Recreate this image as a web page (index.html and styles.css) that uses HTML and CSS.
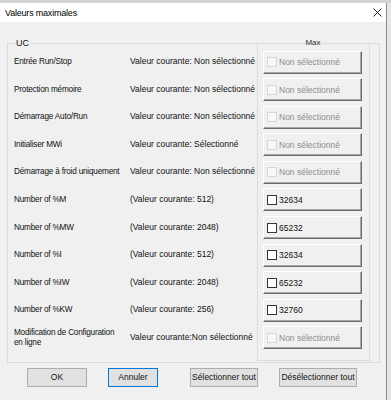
FILE: index.html
```html
<!DOCTYPE html>
<html lang="fr">
<head>
    <meta charset="UTF-8">
    <meta name="viewport" content="width=device-width, initial-scale=1.0">
    <title>Valeurs maximales</title>

    <link rel="stylesheet" href="styles.css">
</head>
<body>
    <div class="behind"></div>
    <div class="screen">
        <div class="dialog">
            <div class="titlebar">
                <span class="title">Valeurs maximales</span>
                <svg class="close" width="9" height="9" viewBox="0 0 9 9">
                    <path d="M0.5 0.5L8.5 8.5M8.5 0.5L0.5 8.5" stroke="#222" stroke-width="1" fill="none"/>
                </svg>
            </div>

            <div class="content">
                <fieldset class="group">
                    <legend>UC</legend>

                    <div class="rows">
                        <div class="row"><span class="name">Entrée Run/Stop</span><span class="value">Valeur courante: Non sélectionné</span></div>
                        <div class="row"><span class="name">Protection mémoire</span><span class="value">Valeur courante: Non sélectionné</span></div>
                        <div class="row"><span class="name">Démarrage Auto/Run</span><span class="value">Valeur courante: Non sélectionné</span></div>
                        <div class="row"><span class="name">Initialiser MWi</span><span class="value">Valeur courante: Sélectionné</span></div>
                        <div class="row"><span class="name">Démarrage à froid uniquement</span><span class="value">Valeur courante: Non sélectionné</span></div>
                        <div class="row"><span class="name">Number of %M</span><span class="value">(Valeur courante: 512)</span></div>
                        <div class="row"><span class="name">Number of %MW</span><span class="value">(Valeur courante: 2048)</span></div>
                        <div class="row"><span class="name">Number of %I</span><span class="value">(Valeur courante: 512)</span></div>
                        <div class="row"><span class="name">Number of %IW</span><span class="value">(Valeur courante: 2048)</span></div>
                        <div class="row"><span class="name">Number of %KW</span><span class="value">(Valeur courante: 256)</span></div>
                        <div class="row"><span class="name">Modification de Configuration<br>en ligne</span><span class="value">Valeur courante:Non sélectionné</span></div>
                    </div>

                    <fieldset class="maxbox">
                        <legend>Max</legend>
                        <div class="check disabled"><span class="box"></span>Non sélectionné</div>
                        <div class="check disabled"><span class="box"></span>Non sélectionné</div>
                        <div class="check disabled"><span class="box"></span>Non sélectionné</div>
                        <div class="check disabled"><span class="box"></span>Non sélectionné</div>
                        <div class="check disabled"><span class="box"></span>Non sélectionné</div>
                        <div class="check"><span class="box"></span>32634</div>
                        <div class="check"><span class="box"></span>65232</div>
                        <div class="check"><span class="box"></span>32634</div>
                        <div class="check"><span class="box"></span>65232</div>
                        <div class="check"><span class="box"></span>32760</div>
                        <div class="check disabled"><span class="box"></span>Non sélectionné</div>
                    </fieldset>
                </fieldset>

                <div class="actions">
                    <button class="btn btn-ok">OK</button>
                    <button class="btn btn-cancel">Annuler</button>
                    <button class="btn btn-all">Sélectionner tout</button>
                    <button class="btn btn-none">Désélectionner tout</button>
                </div>
            </div>
        </div>
        <div class="edge"></div>
    </div>
</body>
</html>
```

FILE: styles.css
```css
*{
    box-sizing: border-box;
}

body{
    margin: 0;
    background-color: #f0f0f0;
    font-family: "Liberation Sans", Arial, sans-serif;
    font-size: 8.5px;
    color: #111;
}

.behind{
    height: 3px;
    background-color: #d4d4d4;
}

.screen{
    display: flex;
    height: 397px;
}

.dialog{
    width: 386px;
    background-color: #f0f0f0;
}

.edge{
    flex: 1;
    background-color: #e6e6e6;
    border-left: 1px solid #8c8c8c;
}

.titlebar{
    height: 19px;
    background-color: #ffffff;
    display: flex;
    align-items: center;
    padding-left: 5px;
    padding-right: 4px;
}

.title{
    flex: 1;
    font-size: 9px;
    letter-spacing: -0.2px;
    color: #000;
}

.content{
    padding-top: 16px;
}

/* group boxes */
.group{
    margin: 0 0 0 7px;
    width: 373px;
    padding: 0 8px 1px 6px;
    border: 1px solid #dcdcdc;
    display: flex;
    align-items: flex-start;
}

.group > legend{
    margin-left: 1px;
    padding: 0 1px;
    line-height: 10px;
    font-size: 9px;
}

.rows{
    width: 243px;
}

.row{
    height: 27.6px;
    display: flex;
    align-items: center;
    line-height: 9.5px;
}

.name{
    width: 116px;
    font-size: 8.2px;
    letter-spacing: -0.2px;
}

.value{
    white-space: nowrap;
}

.maxbox{
    margin: -10px 0 0 0;
    width: 113px;
    padding: 2.5px 6px 10.5px 5px;
    border: 1px solid #dcdcdc;
    display: flex;
    flex-direction: column;
    gap: 4.6px;
}

.maxbox > legend{
    margin: 0 auto;
    padding: 0 2px;
    line-height: 10px;
    font-size: 8px;
    color: #333;
}

.check{
    height: 23px;
    width: 99px;
    display: flex;
    align-items: center;
    padding-left: 3px;
    background-color: #f0f0f0;
    border: 1px solid;
    border-color: #ffffff #6b6b6b #6b6b6b #ffffff;
    box-shadow: inset -1px -1px 0 #a8a8a8;
}

.check .box{
    width: 10px;
    height: 10px;
    margin-right: 2px;
    background-color: #fff;
    border: 1px solid #333;
}

.check.disabled{
    color: #8e8e8e;
}

.check.disabled .box{
    background-color: #f8f8f8;
    border-color: #d6d6d6;
}

/* bottom buttons */
.actions{
    display: flex;
    margin-top: 5px;
    padding-left: 27px;
    gap: 21px;
}

.btn{
    height: 19px;
    padding: 0;
    background-color: #e1e1e1;
    border: 1px solid #adadad;
    font-family: "Liberation Sans", Arial, sans-serif;
    font-size: 8.5px;
    color: #111;
}

.btn-ok{
    width: 60px;
}

.btn-cancel{
    width: 50px;
    border-color: #0078d7;
}

.btn-all{
    width: 68px;
    margin-left: 11px;
}

.btn-none{
    width: 78px;
}
```
